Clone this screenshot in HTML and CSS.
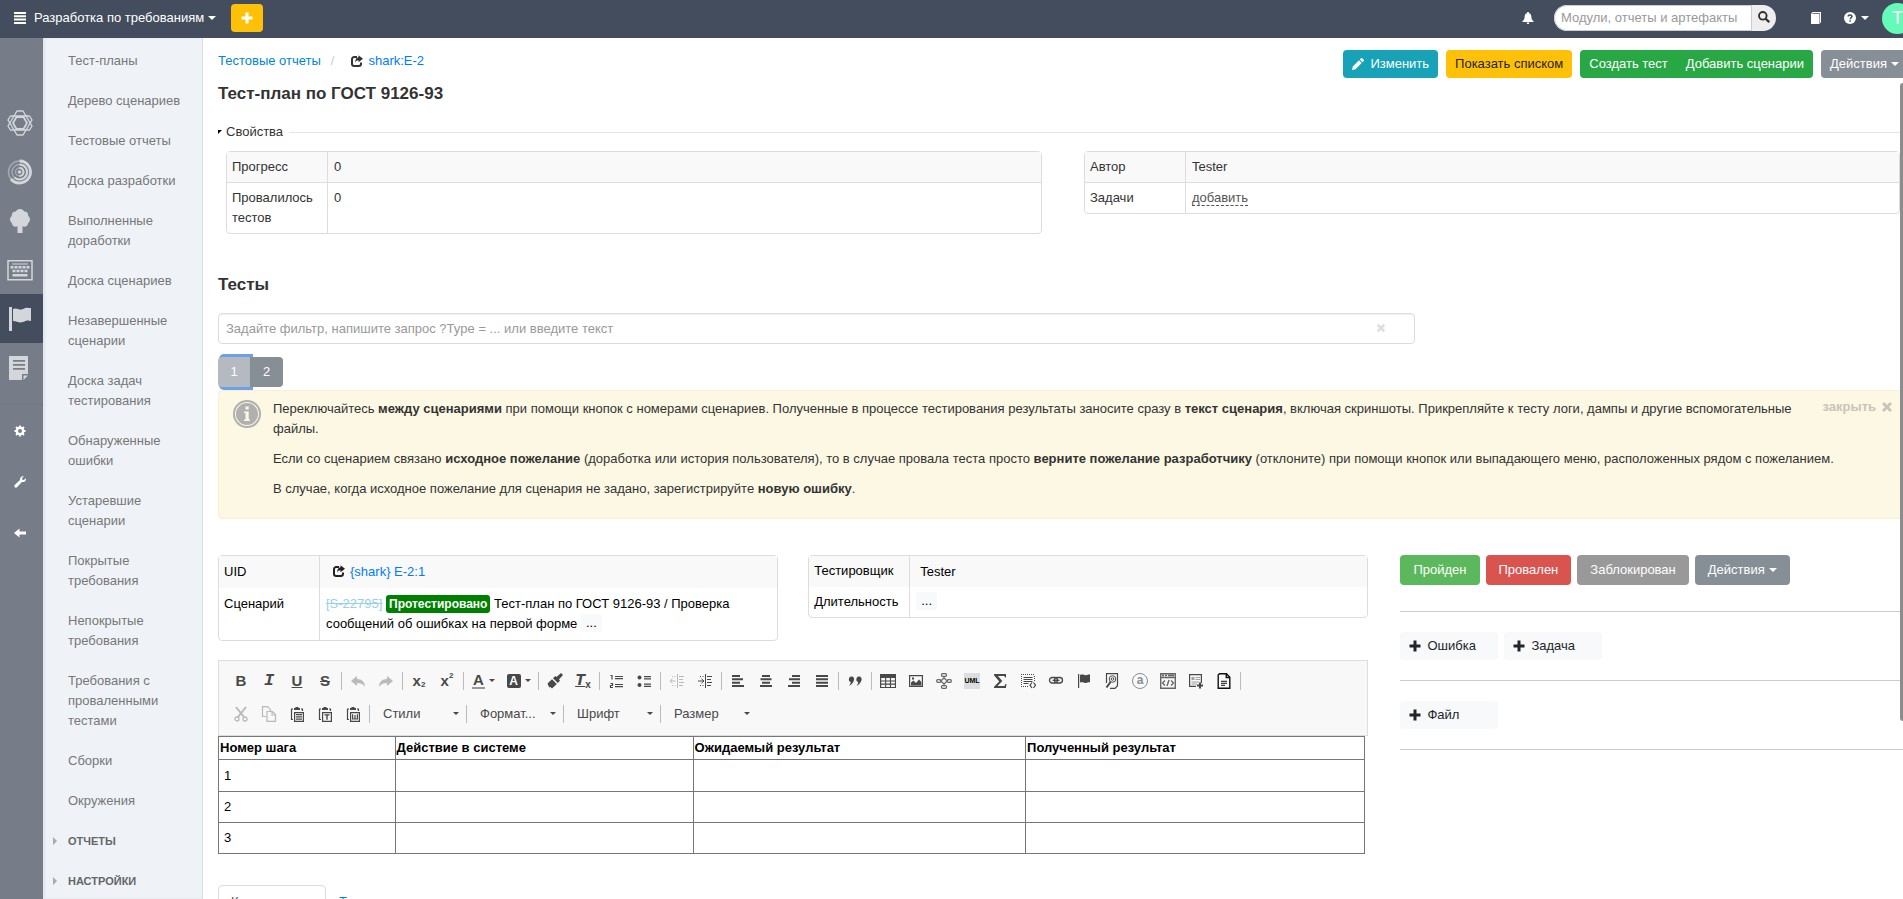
FILE: index.html
```html
<!DOCTYPE html>
<html lang="ru">
<head>
    <meta charset="UTF-8">
    <meta name="viewport" content="width=device-width, initial-scale=1.0">
    <title>Тест-план по ГОСТ 9126-93</title>
    <link rel="stylesheet" href="styles.css">
</head>
<body>
    <!-- Icon sprite -->
    <svg class="sprite" aria-hidden="true">
        <symbol id="i-plus" viewBox="0 0 12 12"><path d="M4.500 0.500h3v4h4v3h-4v4h-3v-4h-4v-3h4z"/></symbol>
        <symbol id="i-share" viewBox="0 0 12 12"><path d="M6 2H3.200A2.200 2.200 0 0 0 1 4.200V8.800A2.200 2.200 0 0 0 3.200 11H7.800A2.200 2.200 0 0 0 10 8.800V7.500" fill="none" stroke="currentColor" stroke-width="2"/><path d="M7.500 0.300L12 3.700L7.500 7.200V5.200C5.800 5.200 5 6 4.200 7.600C4.200 4.500 5.200 2.500 7.500 2.300z"/></symbol>
        <symbol id="i-cross" viewBox="0 0 12 12"><path d="M3 1L6 4l3-3 2 2-3 3 3 3-2 2-3-3-3 3-2-2 3-3-3-3z"/></symbol>
        <symbol id="i-undo" viewBox="0 0 16 16"><path d="M7 3v3c5 0 8 3 8 8-2-3-4-4-8-4v3L1 8z"/></symbol>
        <symbol id="i-paste" viewBox="0 0 16 16"><path d="M4 3H2.500V13.500H4M12 3h1.500v2" fill="none" stroke="currentColor" stroke-width="1.200"/><path d="M5 2h1.500V1h3v1H11v2H5z"/><path d="M5.600 6.600h8.800v8.800H5.600z" fill="none" stroke="currentColor" stroke-width="1.200"/></symbol>
    </svg>

    <header class="topbar">
        <button class="project-menu" type="button">
            <svg class="icon" viewBox="0 0 12 12"><path d="M0 0h12v2H0zM0 3.300h12v2H0zM0 6.600h12v2H0zM0 10h12v2H0z"/></svg>
            <span>Разработка по требованиям</span>
            <i class="caret"></i>
        </button>
        <button class="btn btn-add" type="button" aria-label="Добавить"><svg class="icon" aria-hidden="true"><use href="#i-plus"/></svg></button>
        <div class="topbar-right">
            <button class="top-icon bell" type="button" aria-label="Уведомления">
                <svg class="icon" viewBox="0 0 12 12"><path d="M6 0c.8 0 1 .5 1 1 2 .6 2.300 2.500 2.500 5 .1 1.500 1 2.300 2 3v1H.5V9c1-.7 1.900-1.500 2-3C2.700 3.500 3 1.600 5 1c0-.5.2-1 1-1zM4.700 10.500h2.600c0 1-.5 1.500-1.300 1.500s-1.300-.5-1.300-1.500z"/></svg>
            </button>
            <form class="search">
                <input type="text" aria-label="Поиск" placeholder="Модули, отчеты и артефакты">
                <button type="button" aria-label="Найти">
                    <svg class="icon" viewBox="0 0 12 12" fill="none" stroke="currentColor"><circle cx="4.800" cy="4.800" r="3.800" stroke-width="1.900"/><path d="M7.700 7.700l3.500 3.500" stroke-width="2.300"/></svg>
                </button>
            </form>
            <button class="top-icon book" type="button" aria-label="Документация">
                <svg class="icon" viewBox="0 0 12 12"><path d="M1 2l1.500-2H11v10.500l-1 .5V1.200H3L2 2h7.500v10H1z"/></svg>
            </button>
            <button class="top-icon help" type="button" aria-label="Помощь">
                <svg class="icon" viewBox="0 0 12 12"><circle cx="6" cy="6" r="6"/><path d="M4.200 4.600c0-2.200 3.700-2.200 3.700 0 0 1.400-1.700 1.200-1.700 2.600M6.100 8.300v1.500" fill="none" stroke="#434d5d" stroke-width="1.500"/></svg>
                <i class="caret"></i>
            </button>
            <button class="avatar" type="button">T</button>
        </div>
    </header>

    <div class="layout">
        <nav class="rail" aria-label="Модули">
            <a href="#" aria-label="Требования"><svg viewBox="0 0 26 26" fill="none" stroke="currentColor" stroke-width="1.400"><path d="M10 1h6l9 15-2.500 4H3.500L1 16z" stroke-linejoin="round"/><path d="M10 25h6l9-15-2.500-4H3.500L1 10z" stroke-linejoin="round"/><path d="M9.500 7h7l3.500 6-3.500 6h-7L6 13z" stroke-width="1.800"/></svg></a>
            <a href="#" aria-label="Разработка"><svg viewBox="0 0 26 26" fill="none" stroke="currentColor"><g opacity="0.500" stroke-width="1.500"><circle cx="12.500" cy="13" r="11"/><circle cx="12.500" cy="13" r="7.500"/><circle cx="12.500" cy="13" r="4"/></g><path d="M12.500 2A11 11 0 1 1 4 20" stroke-width="2.800"/><path d="M12.500 5.500a7.500 7.500 0 1 1-5 13" stroke-width="2"/><path d="M12.500 9a4 4 0 0 1 0 8" stroke-width="2"/><circle cx="12.500" cy="13" r="1.800" fill="currentColor" stroke="none"/></svg></a>
            <a href="#" aria-label="Дерево"><svg viewBox="0 0 26 26"><path d="M13 1c2 0 3.500 1 4.200 2.500 2.800 0 4.300 2 4 4.500 1.600 1 2.300 3 1.500 5-.4 1-1 1.700-1.700 2.200 0 2.800-3 4.300-5.500 3v6.800h-5v-6.800c-2.500 1.300-5.500-.2-5.500-3-.7-.5-1.300-1.200-1.700-2.200-.8-2-.1-4 1.500-5-.3-2.500 1.200-4.500 4-4.500C9.500 2 11 1 13 1z"/></svg></a>
            <a href="#" aria-label="Клавиатура"><svg viewBox="0 0 26 26"><path d="M1 3.700h24v19H1z" fill="none" stroke="currentColor" stroke-width="1.500"/><path d="M5 6.500h16v1H5zM3.500 9h3v2.500h-3zM7.500 9h3v2.500h-3zM11.500 9h3v2.500h-3zM15.500 9h3v2.500h-3zM19.500 9h3v2.500h-3zM5.500 12.800h3v2.500h-3zM9.500 12.800h3v2.500h-3zM13.500 12.800h3v2.500h-3zM17.500 12.800h3v2.500h-3zM5.500 17h15v2.500h-15z"/></svg></a>
            <a href="#" class="active" aria-label="Тестирование"><svg viewBox="0 0 26 26"><path d="M2 1h3v24H2zM6 3c4-2 6 2 10 0 3-2 5-1 8-1v13c-3-1-5-.5-8 1-4 1.500-6-1-10-1z"/></svg></a>
            <a href="#" aria-label="Документы"><svg viewBox="0 0 26 26"><path d="M2 1h19v18h-6v6H2zM16.500 25v-4.500H21z"/><path d="M6 5.800h12M6 9.800h12M6 13.800h12" stroke="#777d88" stroke-width="1.800"/></svg></a>
            <div class="rail-tools">
                <a href="#" aria-label="Настройки"><svg viewBox="0 0 12 12"><circle cx="6" cy="6" r="3.200" fill="none" stroke="currentColor" stroke-width="2.400"/><path d="M6 0.500v2M6 9.500v2M0.500 6h2M9.500 6h2M2 2l1.500 1.500M8.500 8.500L10 10M2 10l1.500-1.500M8.500 3.500L10 2" stroke="currentColor" stroke-width="1.800"/></svg></a>
                <a href="#" aria-label="Инструменты"><svg viewBox="0 0 12 12"><path d="M10 .3L8 2.300l.4 1.500 1.500.3 1.900-1.900C12.500 4.500 10.500 6.600 7.900 6L3 11.300C1.700 12.600-.6 10.400.7 9L6 4.100C5.500 1.600 7.500-.4 10 .3z"/></svg></a>
                <a href="#" aria-label="Свернуть"><svg viewBox="0 0 12 12"><path d="M0 6l5.500-4.500v3H12v3H5.500v3z"/></svg></a>
            </div>
        </nav>

        <nav class="sidebar" aria-label="Отчеты">
            <ul>
                <li><a href="#">Тест-планы</a></li>
                <li><a href="#">Дерево сценариев</a></li>
                <li><a href="#">Тестовые отчеты</a></li>
                <li><a href="#">Доска разработки</a></li>
                <li><a href="#">Выполненные доработки</a></li>
                <li><a href="#">Доска сценариев</a></li>
                <li><a href="#">Незавершенные сценарии</a></li>
                <li><a href="#">Доска задач тестирования</a></li>
                <li><a href="#">Обнаруженные ошибки</a></li>
                <li><a href="#">Устаревшие сценарии</a></li>
                <li><a href="#">Покрытые требования</a></li>
                <li><a href="#">Непокрытые требования</a></li>
                <li><a href="#">Требования с проваленными тестами</a></li>
                <li><a href="#">Сборки</a></li>
                <li><a href="#">Окружения</a></li>
                <li class="group"><a href="#">ОТЧЕТЫ</a></li>
                <li class="group"><a href="#">НАСТРОЙКИ</a></li>
            </ul>
        </nav>

        <main class="content">
            <div class="page-head">
                <div class="breadcrumb">
                    <a href="#">Тестовые отчеты</a>
                    <span class="slash">/</span>
                    <svg class="icon" aria-hidden="true"><use href="#i-share"/></svg>
                    <a class="uid" href="#">shark:E-2</a>
                </div>
                <div class="actions">
                    <button class="btn btn-info" type="button"><svg class="icon" viewBox="0 0 12 12"><path d="M0 12l.8-3.500L7 2.300 9.700 5 3.500 11.200zM7.800 1.500L9 .3c.5-.5 1-.3 1.400.1l1.200 1.200c.4.4.5.9.1 1.400l-1.200 1.200z"/></svg>Изменить</button>
                    <button class="btn btn-warning" type="button">Показать списком</button>
                    <div class="btn-group">
                        <button class="btn btn-success" type="button">Создать тест</button>
                        <button class="btn btn-success" type="button">Добавить сценарии</button>
                    </div>
                    <button class="btn btn-secondary" type="button">Действия<i class="caret"></i></button>
                </div>
            </div>
            <h1>Тест-план по ГОСТ 9126-93</h1>

            <div class="section-title"><i class="fold"></i><span>Свойства</span></div>
            <div class="props">
                <table class="prop-table lined">
                    <tr><th scope="row">Прогресс</th><td>0</td></tr>
                    <tr><th scope="row">Провалилось тестов</th><td>0</td></tr>
                </table>
                <table class="prop-table lined">
                    <tr><th scope="row">Автор</th><td>Tester</td></tr>
                    <tr><th scope="row">Задачи</th><td><a class="dashed" href="#">добавить</a></td></tr>
                </table>
            </div>

            <h2>Тесты</h2>
            <div class="filter-row">
                <div class="filter">
                    <input type="text" aria-label="Фильтр" placeholder="Задайте фильтр, напишите запрос ?Type = ... или введите текст">
                    <button type="button" aria-label="Очистить"><svg class="icon"><use href="#i-cross"/></svg></button>
                </div>
            </div>

            <div class="pager">
                <button class="current" type="button">1</button>
                <button type="button">2</button>
            </div>

            <div class="hint">
                <svg class="hint-icon" viewBox="0 0 28 28"><circle cx="14" cy="14" r="13" fill="none" stroke="#b0b0ae" stroke-width="2"/><circle cx="14" cy="14" r="11" fill="#b0b0ae"/><path d="M12.500 6.500h3.200v3h-3.200zM11 11.500h4.700v8H17v1.500h-6v-1.500h1.500V13H11z" fill="#fcf8e3"/></svg>
                <div class="hint-text">
                    <p>Переключайтесь <b>между сценариями</b> при помощи кнопок с номерами сценариев. Полученные в процессе тестирования результаты заносите сразу в <b>текст сценария</b>, включая скриншоты. Прикрепляйте к тесту логи, дампы и другие вспомогательные файлы.</p>
                    <p>Если со сценарием связано <b>исходное пожелание</b> (доработка или история пользователя), то в случае провала теста просто <b>верните пожелание разработчику</b> (отклоните) при помощи кнопок или выпадающего меню, расположенных рядом с пожеланием.</p>
                    <p>В случае, когда исходное пожелание для сценария не задано, зарегистрируйте <b>новую ошибку</b>.</p>
                </div>
                <button class="hint-close" type="button">закрыть <svg class="icon"><use href="#i-cross"/></svg></button>
            </div>

            <div class="test">
                <section class="test-main">
                    <div class="details">
                        <table class="prop-table roomy">
                            <tr><th scope="row">UID</th><td class="uid-cell"><svg class="icon" aria-hidden="true"><use href="#i-share"/></svg><a href="#">{shark} E-2:1</a></td></tr>
                            <tr><th scope="row">Сценарий</th><td><a class="closed" href="#">[S-22795]</a> <span class="badge">Протестировано</span> Тест-план по ГОСТ 9126-93 / Проверка сообщений об ошибках на первой форме <button class="more" type="button">...</button></td></tr>
                        </table>
                        <table class="prop-table">
                            <tr><th scope="row">Тестировщик</th><td class="indent">Tester</td></tr>
                            <tr><th scope="row">Длительность</th><td><button class="more" type="button">...</button></td></tr>
                        </table>
                    </div>

                    <div class="editor-bar">
                        <div class="bar-row">
                            <button class="tool bold" type="button">B</button>
                            <button class="tool italic" type="button">I</button>
                            <button class="tool underline" type="button">U</button>
                            <button class="tool strike" type="button">S</button>
                            <i class="sep"></i>
                            <button class="tool" type="button" disabled aria-label="Отменить"><svg><use href="#i-undo"/></svg></button>
                            <button class="tool flip" type="button" disabled aria-label="Повторить"><svg><use href="#i-undo"/></svg></button>
                            <i class="sep"></i>
                            <button class="tool script" type="button">x<sub>2</sub></button>
                            <button class="tool script" type="button">x<sup>2</sup></button>
                            <i class="sep"></i>
                            <button class="tool wide" type="button"><span class="fore">A</span><i class="caret"></i></button>
                            <button class="tool wide" type="button"><span class="back">A</span><i class="caret"></i></button>
                            <i class="sep"></i>
                            <button class="tool" type="button" aria-label="Копировать форматирование"><svg viewBox="0 0 16 16"><path d="M14 0l2 2-4 4.500 1 1.200-2.200 2.300L6 5.200 8.300 3l1.200 1zM5 6.200l4.800 4.800L5 15.500 3.500 14 2.600 14.600 1.500 13 .5 10.500z"/></svg></button>
                            <button class="tool clear-format" type="button"><span>T</span><sub>x</sub></button>
                            <i class="sep"></i>
                            <button class="tool" type="button" aria-label="Нумерованный список"><svg viewBox="0 0 16 16" fill="none" stroke="currentColor" stroke-width="1.200"><path d="M7 3.500h8M7 5.700h8M7 11.500h8M7 13.700h8M2.500 2.500h1.500v4M2.500 10.500h2v2h-2v2h2.500"/></svg></button>
                            <button class="tool" type="button" aria-label="Маркированный список"><svg viewBox="0 0 16 16"><circle cx="3.500" cy="4.500" r="2"/><circle cx="3.500" cy="12" r="2"/><path d="M8 3h7v1.200H8zM8 5.300h7v1.200H8zM8 10.500h7v1.200H8zM8 12.800h7V14H8z"/></svg></button>
                            <i class="sep"></i>
                            <button class="tool" type="button" disabled aria-label="Уменьшить отступ"><svg viewBox="0 0 16 16" fill="none" stroke="currentColor"><path d="M8.500 1v14M10 3.500h5M10 6.500h4M10 9.500h5M10 12.500h4M1 8h5.500M3.500 5.800L1 8l2.500 2.200M3 3.500h1M5.500 3.500h1M3 12.500h1M5.500 12.500h1"/></svg></button>
                            <button class="tool" type="button" aria-label="Увеличить отступ"><svg viewBox="0 0 16 16" fill="none" stroke="currentColor"><path d="M8.500 1v14M10 3.500h5M10 6.500h4M10 9.500h5M10 12.500h4M1 8h5.500M4.500 5.800L7 8l-2.500 2.200M3 3.500h1M5.500 3.500h1M3 12.500h1M5.500 12.500h1"/></svg></button>
                            <i class="sep"></i>
                            <button class="tool" type="button" aria-label="По левому краю"><svg viewBox="0 0 16 16"><path d="M2 2h8v2H2zM2 5.300h11v2H2zM2 8.700h8v2H2zM2 12h12v2H2z"/></svg></button>
                            <button class="tool" type="button" aria-label="По центру"><svg viewBox="0 0 16 16"><path d="M4 2h8v2H4zM2.500 5.300h11v2h-11zM4 8.700h8v2H4zM2 12h12v2H2z"/></svg></button>
                            <button class="tool" type="button" aria-label="По правому краю"><svg viewBox="0 0 16 16"><path d="M6 2h8v2H6zM3 5.300h11v2H3zM6 8.700h8v2H6zM2 12h12v2H2z"/></svg></button>
                            <button class="tool" type="button" aria-label="По ширине"><svg viewBox="0 0 16 16"><path d="M2 2h12v2H2zM2 5.300h12v2H2zM2 8.700h12v2H2zM2 12h12v2H2z"/></svg></button>
                            <i class="sep"></i>
                            <button class="tool" type="button" aria-label="Цитата"><svg viewBox="0 0 16 16"><path d="M4.500 3.500c2.500 0 3.300 2.500 2 5-.8 1.700-2.300 3.300-4.500 4.500 1-1.500 1.600-2.500 1.800-4C1 8.800 1.200 3.500 4.500 3.500zM12 3.500c2.500 0 3.300 2.500 2 5-.8 1.700-2.300 3.300-4.500 4.500 1-1.500 1.600-2.500 1.800-4-2.800-.2-2.600-5.500.7-5.500z"/></svg></button>
                            <i class="sep"></i>
                            <button class="tool" type="button" aria-label="Таблица"><svg viewBox="0 0 16 16"><path d="M0 1h16v14H0zM1.200 5v2.500h3.900V5zM6.200 5v2.500h3.700V5zM11 5v2.500h3.900V5zM1.200 8.600v2h3.900v-2zM6.200 8.600v2h3.700v-2zM11 8.600v2h3.900v-2zM1.200 11.700V14h3.900v-2.300zM6.200 11.700V14h3.700v-2.300zM11 11.700V14h3.900v-2.300z" fill-rule="evenodd"/></svg></button>
                            <button class="tool" type="button" aria-label="Изображение"><svg viewBox="0 0 16 16"><path d="M1 2h14v12H1zM2.200 3.200v9.600h11.600V3.200z" fill-rule="evenodd"/><path d="M3 12.500V9.500L5.500 7.500 8 10l3-3.500 2.300 2.500v3.500z"/><path d="M4 4.500h2v2H4z"/></svg></button>
                            <button class="tool soft" type="button" aria-label="Диаграмма"><svg viewBox="0 0 16 16" fill="none" stroke="currentColor" stroke-width="1.200"><rect x="5.500" y="0.700" width="5" height="2.600" rx="1"/><rect x="5.500" y="12.700" width="5" height="2.600" rx="1"/><rect x="0.700" y="6.700" width="4" height="2.600" rx="1"/><rect x="11.300" y="6.700" width="4" height="2.600" rx="1"/><path d="M8 3.300V5l3.300 3L8 11v1.700M8 5L4.700 8 8 11"/></svg></button>
                            <button class="tool uml" type="button"><span>UML</span></button>
                            <button class="tool" type="button" aria-label="Формула"><svg viewBox="0 0 16 16"><path d="M2 1h12v3.500h-1L12.300 3H6l4.300 5L5.500 13h7l1-2h1l-.6 4H2v-1.200L7.200 8.500 2 2.200z"/></svg></button>
                            <button class="tool" type="button" aria-label="Блок"><svg viewBox="0 0 16 16" fill="none" stroke="currentColor"><path d="M1 1.500h14M1.500 1v13M14.500 3v6M1 13.500h8" stroke-dasharray="1 1"/><path d="M3.500 4.500h9M3.500 6.500h9M3.500 8.500h9M3.500 10.500h5" stroke-width="1.200"/><path d="M12 9.500l-2 2.700 2 2.800M13.500 9.500l2 2.700-2 2.800" stroke-width="1.200"/></svg></button>
                            <button class="tool" type="button" aria-label="Ссылка"><svg viewBox="0 0 16 16" fill="none" stroke="currentColor" stroke-width="1.300"><rect x="1.500" y="4.500" width="8" height="5.500" rx="2.700"/><rect x="6.500" y="4.500" width="8" height="5.500" rx="2.700"/><path d="M4.500 7.300h7"/></svg></button>
                            <button class="tool" type="button" aria-label="Якорь"><svg viewBox="0 0 16 16"><path d="M2 1h1.200v14H2zM4 2c3-1.500 4.500 1 7 0 1.200-.6 2-.5 3-.5V9.500c-1-.3-2-.2-3 .3-2.500 1-4-1-7-.3z"/></svg></button>
                            <button class="tool" type="button" aria-label="Найти"><svg viewBox="0 0 16 16" fill="none" stroke="currentColor"><path d="M2.500 10V.7h11v12l-2.500 2.600H6" stroke-width="1.200"/><circle cx="8.500" cy="6" r="3.300"/><circle cx="8.500" cy="6" r="1.300"/><path d="M6.500 9L2.500 14.500" stroke-width="2"/></svg></button>
                            <button class="tool at" type="button"><span>a</span></button>
                            <button class="tool soft" type="button" aria-label="Код"><svg viewBox="0 0 16 16" fill="none" stroke="currentColor"><path d="M.7.7h14.600v14.600H.7zM.7 4.500h14.600M2 2.500h2M5 2.500h2M8 2.500h6" stroke-width="1.400"/><path d="M5 7.500L2.500 10 5 12.500M11 7.500l2.500 2.500-2.500 2.500M9 7l-2 6" stroke-width="1.400"/></svg></button>
                            <button class="tool" type="button" aria-label="Шаблоны"><svg viewBox="0 0 16 16"><path d="M1 1h13v9h-1.200V2.200H2.200v10.600H8V14H1z"/><path d="M3.500 4h3v3h-3zM7.500 4H12v1H7.500zM7.500 6H12v1H7.500zM3.500 8.500H11v1H3.500zM3.500 10.500H9v1H3.500z" opacity="0.500"/><path d="M11 9.500h2v2h2v2h-2v2h-2v-2H9v-2h2z"/></svg></button>
                            <button class="tool dark" type="button" aria-label="Документ"><svg viewBox="0 0 16 16" fill="none" stroke="currentColor" stroke-width="1.400"><path d="M3.500.8h7l3.300 3.500v10.900H2.200V2z"/><path d="M10.300 1v3.500h3.500"/><path d="M5 8.300h6M5 10.300h6M5 12.300h4" stroke-width="1"/></svg></button>
                            <i class="sep"></i>
                        </div>
                        <div class="bar-row">
                            <button class="tool" type="button" disabled aria-label="Вырезать"><svg viewBox="0 0 16 16" fill="none" stroke="currentColor" stroke-width="2"><path d="M3 1l8 10M13 1L5 11"/><circle cx="4" cy="13" r="2" stroke-width="1.300"/><circle cx="12" cy="13" r="2" stroke-width="1.300"/></svg></button>
                            <button class="tool" type="button" disabled aria-label="Копировать"><svg viewBox="0 0 16 16" fill="none" stroke="currentColor" stroke-width="1.200"><path d="M5 10.500H1.500V.7h5l3 3v1.500M6 5.500h5.500l3 3v6.900H6zM11 5.500v3.500h3.500"/></svg></button>
                            <button class="tool" type="button" aria-label="Вставить"><svg viewBox="0 0 16 16"><use href="#i-paste"/><path d="M7 8h6v1.200H7zM7 10.300h6v1.200H7zM7 12.600h6v1.200H7z"/></svg></button>
                            <button class="tool" type="button" aria-label="Вставить текст"><svg viewBox="0 0 16 16"><use href="#i-paste"/><path d="M7.500 8.200h5v1.300h-1.800v4.300H9.300V9.500H7.500z"/></svg></button>
                            <button class="tool" type="button" aria-label="Вставить из Word"><svg viewBox="0 0 16 16"><use href="#i-paste"/><path d="M7.600 8.200V13h4.800V8.200M10 9v4" fill="none" stroke="currentColor" stroke-width="1.200"/></svg></button>
                            <i class="sep"></i>
                            <span class="combo"><select aria-label="Стили"><option>Стили</option></select><i class="caret"></i></span>
                            <i class="sep"></i>
                            <span class="combo"><select aria-label="Форматирование"><option>Формат...</option></select><i class="caret"></i></span>
                            <i class="sep"></i>
                            <span class="combo"><select aria-label="Шрифт"><option>Шрифт</option></select><i class="caret"></i></span>
                            <i class="sep"></i>
                            <span class="combo"><select aria-label="Размер"><option>Размер</option></select><i class="caret"></i></span>
                        </div>
                    </div>

                    <div class="steps-wrap">
                        <table class="steps">
                            <thead>
                                <tr><th>Номер шага</th><th>Действие в системе</th><th>Ожидаемый результат</th><th>Полученный результат</th></tr>
                            </thead>
                            <tbody>
                                <tr><td>1</td><td></td><td></td><td></td></tr>
                                <tr><td>2</td><td></td><td></td><td></td></tr>
                                <tr><td>3</td><td></td><td></td><td></td></tr>
                            </tbody>
                        </table>
                    </div>

                    <div class="tabs">
                        <a class="active" href="#">Комментарии</a>
                        <a href="#">Трассировка</a>
                    </div>
                </section>

                <aside class="test-side">
                    <div class="results">
                        <button class="btn btn-pass" type="button">Пройден</button>
                        <button class="btn btn-fail" type="button">Провален</button>
                        <button class="btn btn-block" type="button">Заблокирован</button>
                        <button class="btn btn-secondary" type="button">Действия<i class="caret"></i></button>
                    </div>
                    <hr>
                    <div class="adders">
                        <button type="button"><svg class="icon"><use href="#i-plus"/></svg>Ошибка</button>
                        <button type="button"><svg class="icon"><use href="#i-plus"/></svg>Задача</button>
                    </div>
                    <hr>
                    <div class="adders">
                        <button type="button"><svg class="icon"><use href="#i-plus"/></svg>Файл</button>
                    </div>
                    <hr>
                </aside>
            </div>
        </main>
    </div>
    <div class="scroll-thumb"></div>
</body>
</html>
```
FILE: styles.css
```css
* {
    margin: 0;
    padding: 0;
    box-sizing: border-box;
}

body {
    height: 100vh;
    overflow: hidden;
    position: relative;
    display: flex;
    flex-direction: column;
    background-color: #fff;
    color: #333;
    font-family: "Liberation Sans", Arial, Helvetica, sans-serif;
    font-size: 13px;
    line-height: 20px;
}

button, input, select {
    font: inherit;
    color: inherit;
    border: none;
    background: none;
}

button {
    cursor: pointer;
}

a {
    color: #007bff;
    text-decoration: none;
}

svg:not([fill]) {
    fill: currentColor;
}

.sprite {
    position: absolute;
    width: 0;
    height: 0;
}

.icon {
    width: 12px;
    height: 12px;
    flex: none;
}

.caret {
    display: inline-block;
    border: 4px solid transparent;
    border-top-color: currentColor;
    border-bottom: none;
}

/* Top bar */
.topbar {
    height: 38px;
    flex: none;
    display: flex;
    align-items: center;
    padding: 0 0 2px 14px;
    background-color: #434d5d;
    color: #fff;
}

.project-menu {
    display: flex;
    align-items: center;
    margin-right: 15px;
}

.project-menu .icon {
    margin-right: 8px;
}

.project-menu .caret {
    margin-left: 4px;
}

.topbar-right {
    margin-left: auto;
    margin-right: -10px;
    display: flex;
    align-items: center;
}

.top-icon {
    display: flex;
    align-items: center;
    gap: 5px;
}

.bell {
    margin-right: 20px;
}

.search {
    display: flex;
    height: 26px;
    width: 222px;
    margin-right: 34px;
    border-radius: 13px;
    overflow: hidden;
    background-color: #eee;
    color: #333;
}

.search input {
    flex: 1;
    min-width: 0;
    padding: 0 6px;
    background-color: #fff;
    border: 1px solid #ccc;
    border-radius: 13px 0 0 13px;
}

.search button {
    width: 24px;
    padding: 6px 5px;
    line-height: 12px;
}

::placeholder {
    color: #999;
    opacity: 1;
}

.book {
    margin-right: 22px;
}

.help {
    margin-right: 13px;
}

.avatar {
    width: 31px;
    height: 31px;
    border-radius: 50%;
    background-color: #63fbb7;
    color: #fff;
    font-size: 18px;
}

/* Buttons */
.btn {
    display: inline-flex;
    align-items: center;
    justify-content: center;
    height: 28px;
    padding: 0 9px;
    border-radius: 4px;
    color: #fff;
    white-space: nowrap;
}

.btn .caret {
    margin-left: 4px;
}

.btn-add {
    width: 32px;
    padding: 0;
    background-color: #ffc107;
}

.btn-info {
    background-color: #17a2b8;
}

.btn-info .icon {
    margin-right: 6px;
}

.btn-warning {
    background-color: #ffc107;
    color: #212529;
}

.btn-success {
    background-color: #28a745;
}

.btn-secondary {
    background-color: #868e96;
}

.btn-pass {
    background-color: #5cb85c;
}

.btn-fail {
    background-color: #d9534f;
}

.btn-block {
    background-color: #999;
}

.btn-group {
    display: flex;
}

.btn-group .btn:first-child {
    border-radius: 4px 0 0 4px;
}

.btn-group .btn:last-child {
    border-radius: 0 4px 4px 0;
}

/* Layout */
.layout {
    flex: 1;
    min-height: 0;
    display: flex;
}

.rail {
    width: 43px;
    flex: none;
    padding-top: 60px;
    background-color: #777d88;
}

.rail a {
    display: flex;
    align-items: center;
    height: 49px;
    padding-left: 7px;
    color: #d3d6da;
}

.rail a.active {
    background-color: #434d5d;
}

.rail svg {
    width: 26px;
    height: 26px;
}

.rail-tools {
    margin-top: 12px;
    border-top: 1px solid #727883;
}

.rail-tools a {
    height: 51px;
    padding-left: 14px;
    color: #fff;
}

.rail-tools svg {
    width: 12px;
    height: 12px;
}

.sidebar {
    width: 160px;
    flex: none;
    padding-top: 3px;
    overflow: hidden;
    background-color: #eff3f8;
    border-right: 1px solid #d9dde3;
    box-shadow: inset 2px 0 3px rgba(0, 0, 0, 0.06);
}

.sidebar ul {
    list-style: none;
}

.sidebar a {
    display: block;
    padding: 10px 14px 10px 25px;
    color: #777;
}

.sidebar .group {
    display: flex;
    align-items: center;
}

.sidebar .group::before {
    content: "";
    margin-left: 10px;
    border: 4px solid transparent;
    border-left-color: #aaa;
    border-right: none;
}

.sidebar .group a {
    padding-left: 11px;
    font-size: 11px;
    font-weight: bold;
    color: #666;
}

/* The page area runs a little past the window edge */
.content {
    flex: 1;
    min-width: 0;
    margin-right: -5px;
    padding: 12px 0 0 15px;
}

.page-head {
    display: flex;
    justify-content: space-between;
    align-items: flex-start;
    margin-bottom: 4px;
}

.breadcrumb {
    display: flex;
    align-items: center;
    padding-top: 1px;
}

.breadcrumb a {
    color: #08c;
}

.breadcrumb .uid {
    color: #007bff;
}

.slash {
    margin: 0 17px 0 10px;
    color: #ccc;
}

.breadcrumb .icon {
    margin-right: 5px;
}

.actions {
    display: flex;
    gap: 8px;
}

h1, h2 {
    font-size: 17px;
    line-height: 24px;
}

.section-title {
    display: flex;
    align-items: center;
    margin: 16px 0 9px;
}

.section-title::after {
    content: "";
    flex: 1;
    margin-left: 6px;
    border-top: 1px solid #e5e5e5;
}

.fold {
    margin-right: 4px;
    border-top: 4px solid #000;
    border-right: 4px solid transparent;
}

.props {
    display: grid;
    grid-template-columns: 1fr 1fr;
    gap: 42px;
    align-items: start;
    margin: 0 8px 39px 8px;
}

.prop-table {
    width: 100%;
    table-layout: fixed;
    border: 1px solid #ddd;
    border-radius: 4px;
    border-spacing: 0;
}

.prop-table th, .prop-table td {
    padding: 5px 6px;
    text-align: left;
    vertical-align: top;
    font-weight: normal;
}

.prop-table th {
    width: 101px;
    padding-left: 5px;
    border-right: 1px solid #ddd;
}

.prop-table tr:first-child > * {
    background-color: #f9f9f9;
}

.lined tr:first-child > * {
    border-bottom: 1px solid #ddd;
}

.roomy th, .roomy td {
    padding-top: 6px;
    padding-bottom: 6px;
}

.dashed {
    color: #555;
    border-bottom: 1px dashed #555;
}

.filter-row {
    display: grid;
    grid-template-columns: 17fr 7fr;
    margin: 16px 0 13px;
}

.filter {
    display: flex;
    align-items: center;
    height: 31px;
    padding: 0 28px 0 7px;
    border: 1px solid #ddd;
    border-radius: 4px;
    box-shadow: inset 0 1px 1px rgba(0, 0, 0, 0.07);
}

.filter input {
    flex: 1;
}

.filter button {
    line-height: 10px;
    color: #ddd;
}

.filter .icon {
    width: 10px;
    height: 10px;
}

.pager {
    display: flex;
    margin-bottom: 3px;
}

.pager button {
    width: 33px;
    height: 30px;
    border-radius: 0 4px 4px 0;
    background-color: #868e96;
    color: #fff;
    z-index: 1;
}

.pager .current {
    width: 32px;
    border-radius: 4px 0 0 4px;
    background-color: #b4babf;
    box-shadow: 2px -2px 0 1px #6c9fe8, 2px 2px 0 1px #6c9fe8;
    z-index: 0;
    clip-path: inset(-3px -4px -3px 0);
}

.hint {
    display: flex;
    position: relative;
    padding: 8px 73px 9px 14px;
    background-color: #fcf8e3;
    border: 1px solid #fbeed5;
    border-radius: 4px;
}

.hint-icon {
    width: 28px;
    height: 28px;
    flex: none;
    margin: 1px 12px 0 0;
}

.hint p {
    margin-bottom: 10px;
}

.hint-close {
    position: absolute;
    top: 6px;
    right: 14px;
    display: flex;
    align-items: center;
    gap: 5px;
    color: #c8c5b8;
    font-weight: bold;
}

/* Test */
.test {
    display: grid;
    grid-template-columns: minmax(0, 34fr) minmax(0, 15fr);
    gap: 32px;
    margin-top: 36px;
    color: #000;
}

.details {
    display: grid;
    grid-template-columns: 1fr 1fr;
    gap: 30px;
    align-items: start;
    margin-bottom: 19px;
}

.uid-cell .icon {
    margin: 0 5px 0 7px;
    vertical-align: -1px;
    color: #222;
}

.prop-table .indent {
    padding: 6px 10px 5px;
}

.closed {
    color: #99cfeb;
    text-decoration: line-through;
}

.badge {
    padding: 2px 3px;
    border-radius: 3px;
    background-color: green;
    color: #fff;
    font-size: 12px;
    font-weight: bold;
}

.more {
    height: 18px;
    padding: 0 5px;
    border-radius: 3px;
    background-color: #f8f9fa;
    line-height: 18px;
    vertical-align: top;
}

/* Editor */
.editor-bar {
    padding: 6px 8px 8px;
    border: 1px solid #ddd;
    background-color: #f8f8f8;
    color: #484848;
}

.bar-row {
    display: flex;
    align-items: center;
    height: 27px;
}

.bar-row + .bar-row {
    margin-top: 6px;
}

.tool {
    width: 28px;
    height: 27px;
    flex: none;
    display: flex;
    align-items: center;
    justify-content: center;
    font-size: 15px;
    font-weight: bold;
}

.tool svg {
    width: 16px;
    height: 16px;
}

.tool:disabled {
    opacity: 0.35;
}

.wide {
    width: 35px;
}

.wide .caret, .combo .caret {
    border-width: 3px;
    border-bottom: none;
    margin-left: 4px;
}

.sep {
    width: 1px;
    height: 18px;
    margin: 0 2px;
    flex: none;
    background-color: #bcbcbc;
}

.italic, .clear-format {
    font-family: "Liberation Mono", monospace;
    font-style: italic;
    font-size: 17px;
}

.underline {
    text-decoration: underline;
}

.strike {
    text-decoration: line-through;
}

.script sub, .script sup, .clear-format sub {
    font-size: 8px;
    line-height: 8px;
}

.clear-format span {
    text-decoration: underline;
}

.clear-format sub {
    font-family: "Liberation Sans", sans-serif;
    font-style: normal;
    font-size: 10px;
}

.script sub, .clear-format sub {
    align-self: flex-end;
    padding-bottom: 5px;
}

.script sup {
    align-self: flex-start;
    padding-top: 5px;
}

.flip svg {
    transform: scaleX(-1);
}

.fore {
    padding: 0 1px;
    border-bottom: 2px solid #999;
    line-height: 14px;
}

.back {
    width: 14px;
    border-radius: 2px;
    background-color: #484848;
    color: #fff;
    font-size: 12px;
    line-height: 14px;
}

.soft {
    color: #666;
}

.dark {
    color: #111;
}

.uml span {
    width: 16px;
    background-color: #ddd;
    color: #000;
    font-size: 7px;
    line-height: 16px;
}

.at span {
    width: 16px;
    height: 16px;
    border: 1px solid #868e96;
    border-radius: 50%;
    color: #868e96;
    font-size: 12px;
    line-height: 13px;
}

.combo {
    width: 92px;
    display: flex;
    align-items: center;
    padding: 0 5px 0 11px;
}

.combo select {
    flex: 1;
    min-width: 0;
    appearance: none;
}

.steps-wrap {
    padding-right: 3px;
}

.steps {
    width: 100%;
    table-layout: fixed;
    border-collapse: collapse;
}

.steps th, .steps td {
    border: 1px solid #777;
    text-align: left;
}

.steps th {
    padding: 1px;
}

.steps th:nth-child(1) {
    width: 15.4%;
}

.steps th:nth-child(2) {
    width: 26%;
}

.steps th:nth-child(3) {
    width: 29%;
}

.steps td {
    height: 31px;
    padding: 5px;
}

.steps tbody tr:first-child td {
    height: 32px;
}

.tabs {
    display: flex;
    margin-top: 31px;
}

.tabs a {
    padding: 6px 12px;
    border: 1px solid transparent;
    border-radius: 4px 4px 0 0;
    color: #08c;
}

.tabs .active {
    border-color: #ddd;
    color: #555;
}

/* Side column */
.results, .adders {
    display: flex;
    gap: 6px;
}

.results .btn {
    height: 30px;
    padding: 0 13px;
}

.test-side hr {
    border: none;
    border-top: 1px solid #ccc;
    margin: 20px 0;
}

.results + hr {
    margin-top: 26px;
}

.adders button {
    width: 98px;
    height: 28px;
    display: flex;
    align-items: center;
    gap: 6px;
    padding-left: 9px;
    border-radius: 4px;
    background-color: #f8f9fa;
    color: #212529;
}

.scroll-thumb {
    position: absolute;
    top: 83px;
    right: 0;
    width: 3px;
    height: 71%;
    border-radius: 3px 0 0 3px;
    background-color: #8c8c8c;
}
```
